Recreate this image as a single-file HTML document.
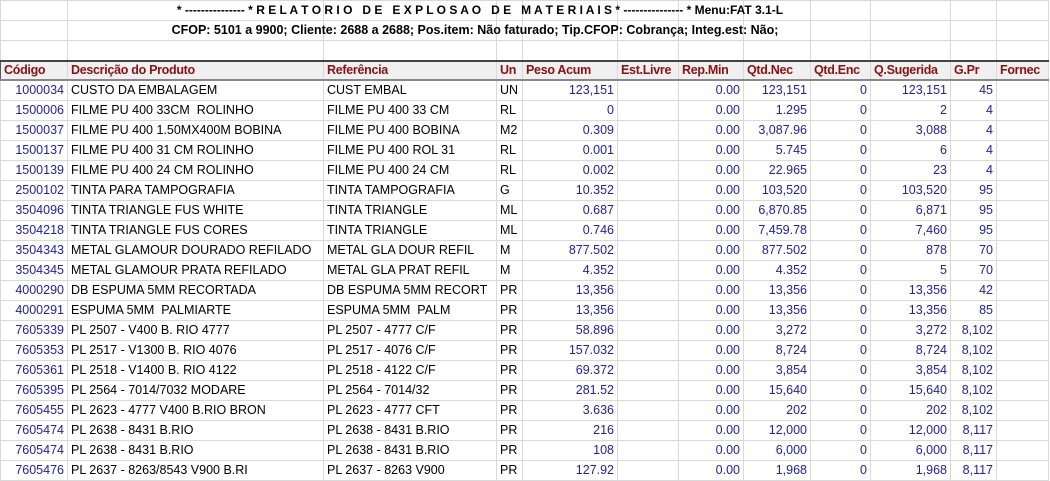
<!DOCTYPE html>
<html><head><meta charset="utf-8"><style>
body{margin:0;width:1050px;height:480px;overflow:hidden;background:#fff;font-family:"Liberation Sans",sans-serif;}
table{border-collapse:collapse;table-layout:fixed;position:absolute;left:0;top:0;}
td{border:1px solid #d9d9d9;height:20px;padding:0 3px;font-size:12.5px;white-space:nowrap;overflow:hidden;line-height:19px;box-sizing:border-box;}
.h td{background:#f0f0f0;color:#8b1010;font-weight:bold;font-size:12.5px;border-top:2px solid #444;border-bottom:2px solid #888;border-left:1px solid #555;height:19px;line-height:17px;letter-spacing:-0.3px}
.c{color:#2020b0;text-align:right}
</style></head><body>
<div style="position:absolute;left:0;top:0;width:960px;height:20px;text-align:center;font-weight:bold;font-size:12px;line-height:20px;z-index:2">* --------------- * R E L A T O R I O &nbsp; D E &nbsp; E X P L O S A O &nbsp; D E &nbsp; M A T E R I A I S * --------------- * Menu:FAT 3.1-L</div>
<div style="position:absolute;left:0;top:20px;width:950px;height:20px;text-align:center;font-weight:bold;font-size:12.5px;line-height:20px;z-index:2">CFOP: 5101 a 9900; Cliente: 2688 a 2688; Pos.item: Não faturado; Tip.CFOP: Cobrança; Integ.est: Não;</div>
<table>
<colgroup><col style="width:67px"><col style="width:256px"><col style="width:173px"><col style="width:26px"><col style="width:95px"><col style="width:61px"><col style="width:65px"><col style="width:67px"><col style="width:60px"><col style="width:80px"><col style="width:46px"><col style="width:52px"></colgroup>
<tr><td></td><td style="border-left:none"></td><td style="border-left:none"></td><td style="border-left:none"></td><td style="border-left:none"></td><td style="border-left:none"></td><td style="border-left:none"></td><td style="border-left:none"></td><td style="border-left:none"></td><td style="border-left:none"></td><td></td><td></td></tr>
<tr><td></td><td style="border-left:none"></td><td style="border-left:none"></td><td style="border-left:none"></td><td style="border-left:none"></td><td style="border-left:none"></td><td style="border-left:none"></td><td style="border-left:none"></td><td style="border-left:none"></td><td style="border-left:none"></td><td></td><td></td></tr>
<tr><td></td><td></td><td></td><td></td><td></td><td></td><td></td><td></td><td></td><td></td><td></td><td></td></tr>
<tr class="h"><td>Código</td><td>Descrição do Produto</td><td>Referência</td><td>Un</td><td>Peso Acum</td><td>Est.Livre</td><td>Rep.Min</td><td>Qtd.Nec</td><td>Qtd.Enc</td><td>Q.Sugerida</td><td>G.Pr</td><td>Fornec</td></tr>
<tr><td class="c">1000034</td><td>CUSTO DA EMBALAGEM</td><td>CUST EMBAL</td><td>UN</td><td class="c">123,151</td><td></td><td class="c">0.00</td><td class="c">123,151</td><td class="c">0</td><td class="c">123,151</td><td class="c">45</td><td></td></tr>
<tr><td class="c">1500006</td><td>FILME PU 400 33CM&nbsp; ROLINHO</td><td>FILME PU 400 33 CM</td><td>RL</td><td class="c">0</td><td></td><td class="c">0.00</td><td class="c">1.295</td><td class="c">0</td><td class="c">2</td><td class="c">4</td><td></td></tr>
<tr><td class="c">1500037</td><td>FILME PU 400 1.50MX400M BOBINA</td><td>FILME PU 400 BOBINA</td><td>M2</td><td class="c">0.309</td><td></td><td class="c">0.00</td><td class="c">3,087.96</td><td class="c">0</td><td class="c">3,088</td><td class="c">4</td><td></td></tr>
<tr><td class="c">1500137</td><td>FILME PU 400 31 CM ROLINHO</td><td>FILME PU 400 ROL 31</td><td>RL</td><td class="c">0.001</td><td></td><td class="c">0.00</td><td class="c">5.745</td><td class="c">0</td><td class="c">6</td><td class="c">4</td><td></td></tr>
<tr><td class="c">1500139</td><td>FILME PU 400 24 CM ROLINHO</td><td>FILME PU 400 24 CM</td><td>RL</td><td class="c">0.002</td><td></td><td class="c">0.00</td><td class="c">22.965</td><td class="c">0</td><td class="c">23</td><td class="c">4</td><td></td></tr>
<tr><td class="c">2500102</td><td>TINTA PARA TAMPOGRAFIA</td><td>TINTA TAMPOGRAFIA</td><td>G</td><td class="c">10.352</td><td></td><td class="c">0.00</td><td class="c">103,520</td><td class="c">0</td><td class="c">103,520</td><td class="c">95</td><td></td></tr>
<tr><td class="c">3504096</td><td>TINTA TRIANGLE FUS WHITE</td><td>TINTA TRIANGLE</td><td>ML</td><td class="c">0.687</td><td></td><td class="c">0.00</td><td class="c">6,870.85</td><td class="c">0</td><td class="c">6,871</td><td class="c">95</td><td></td></tr>
<tr><td class="c">3504218</td><td>TINTA TRIANGLE FUS CORES</td><td>TINTA TRIANGLE</td><td>ML</td><td class="c">0.746</td><td></td><td class="c">0.00</td><td class="c">7,459.78</td><td class="c">0</td><td class="c">7,460</td><td class="c">95</td><td></td></tr>
<tr><td class="c">3504343</td><td>METAL GLAMOUR DOURADO REFILADO</td><td>METAL GLA DOUR REFIL</td><td>M</td><td class="c">877.502</td><td></td><td class="c">0.00</td><td class="c">877.502</td><td class="c">0</td><td class="c">878</td><td class="c">70</td><td></td></tr>
<tr><td class="c">3504345</td><td>METAL GLAMOUR PRATA REFILADO</td><td>METAL GLA PRAT REFIL</td><td>M</td><td class="c">4.352</td><td></td><td class="c">0.00</td><td class="c">4.352</td><td class="c">0</td><td class="c">5</td><td class="c">70</td><td></td></tr>
<tr><td class="c">4000290</td><td>DB ESPUMA 5MM RECORTADA</td><td>DB ESPUMA 5MM RECORT</td><td>PR</td><td class="c">13,356</td><td></td><td class="c">0.00</td><td class="c">13,356</td><td class="c">0</td><td class="c">13,356</td><td class="c">42</td><td></td></tr>
<tr><td class="c">4000291</td><td>ESPUMA 5MM&nbsp; PALMIARTE</td><td>ESPUMA 5MM&nbsp; PALM</td><td>PR</td><td class="c">13,356</td><td></td><td class="c">0.00</td><td class="c">13,356</td><td class="c">0</td><td class="c">13,356</td><td class="c">85</td><td></td></tr>
<tr><td class="c">7605339</td><td>PL 2507 - V400 B. RIO 4777</td><td>PL 2507 - 4777 C/F</td><td>PR</td><td class="c">58.896</td><td></td><td class="c">0.00</td><td class="c">3,272</td><td class="c">0</td><td class="c">3,272</td><td class="c">8,102</td><td></td></tr>
<tr><td class="c">7605353</td><td>PL 2517 - V1300 B. RIO 4076</td><td>PL 2517 - 4076 C/F</td><td>PR</td><td class="c">157.032</td><td></td><td class="c">0.00</td><td class="c">8,724</td><td class="c">0</td><td class="c">8,724</td><td class="c">8,102</td><td></td></tr>
<tr><td class="c">7605361</td><td>PL 2518 - V1400 B. RIO 4122</td><td>PL 2518 - 4122 C/F</td><td>PR</td><td class="c">69.372</td><td></td><td class="c">0.00</td><td class="c">3,854</td><td class="c">0</td><td class="c">3,854</td><td class="c">8,102</td><td></td></tr>
<tr><td class="c">7605395</td><td>PL 2564 - 7014/7032 MODARE</td><td>PL 2564 - 7014/32</td><td>PR</td><td class="c">281.52</td><td></td><td class="c">0.00</td><td class="c">15,640</td><td class="c">0</td><td class="c">15,640</td><td class="c">8,102</td><td></td></tr>
<tr><td class="c">7605455</td><td>PL 2623 - 4777 V400 B.RIO BRON</td><td>PL 2623 - 4777 CFT</td><td>PR</td><td class="c">3.636</td><td></td><td class="c">0.00</td><td class="c">202</td><td class="c">0</td><td class="c">202</td><td class="c">8,102</td><td></td></tr>
<tr><td class="c">7605474</td><td>PL 2638 - 8431 B.RIO</td><td>PL 2638 - 8431 B.RIO</td><td>PR</td><td class="c">216</td><td></td><td class="c">0.00</td><td class="c">12,000</td><td class="c">0</td><td class="c">12,000</td><td class="c">8,117</td><td></td></tr>
<tr><td class="c">7605474</td><td>PL 2638 - 8431 B.RIO</td><td>PL 2638 - 8431 B.RIO</td><td>PR</td><td class="c">108</td><td></td><td class="c">0.00</td><td class="c">6,000</td><td class="c">0</td><td class="c">6,000</td><td class="c">8,117</td><td></td></tr>
<tr><td class="c">7605476</td><td>PL 2637 - 8263/8543 V900 B.RI</td><td>PL 2637 - 8263 V900</td><td>PR</td><td class="c">127.92</td><td></td><td class="c">0.00</td><td class="c">1,968</td><td class="c">0</td><td class="c">1,968</td><td class="c">8,117</td><td></td></tr>
</table>
</body></html>
